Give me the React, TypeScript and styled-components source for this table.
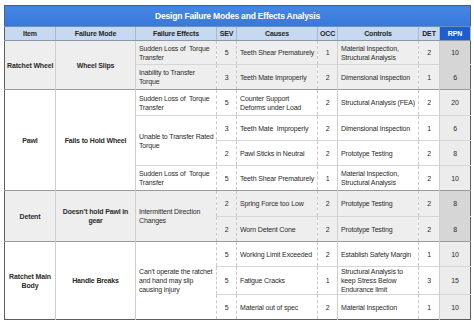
import React from "react";
import styled, { createGlobalStyle } from "styled-components";

const GlobalStyle = createGlobalStyle`
  html, body {
    margin: 0;
    padding: 0;
    background: #ffffff;
  }
  body {
    font-family: "Liberation Sans", Arial, sans-serif;
  }
`;

const Page = styled.main`
  width: 474px;
  height: 328px;
  padding: 5px 4px 0 4px;
  box-sizing: border-box;
  background: #ffffff;
`;

const Table = styled.table`
  width: 466px;
  border-collapse: collapse;
  table-layout: fixed;
  border: 1px solid #5f5f5f;
  font-size: 7px;
  letter-spacing: -0.15px;
  color: #2b2b2b;
`;

const TitleCell = styled.th`
  height: 20px;
  padding: 0;
  background: linear-gradient(#4686e4, #3878da);
  color: #ffffff;
  font-size: 8.5px;
  letter-spacing: -0.2px;
  font-weight: bold;
  text-align: center;
  border-bottom: 1px solid #6e8fbf;
`;

const HeadCell = styled.th<{ $dark?: boolean }>`
  height: 13px;
  padding: 0;
  font-weight: bold;
  text-align: center;
  background: ${(p) => (p.$dark ? "#1f5ccc" : "#c6d9f1")};
  color: ${(p) => (p.$dark ? "#ffffff" : "#1f1f1f")};
  border-right: 1px solid #a9b8cc;
  border-bottom: 1px solid #8c98a8;
`;

const Row = styled.tr<{ $h: number; $groupStart?: boolean }>`
  height: ${(p) => p.$h}px;
  border-top: 1px solid ${(p) => (p.$groupStart ? "#9a9a9a" : "#d6d6d6")};
`;

const GroupCell = styled.td<{ $shade?: boolean }>`
  padding: 0 2px;
  font-weight: bold;
  text-align: center;
  vertical-align: middle;
  white-space: pre;
  line-height: 9px;
  background: ${(p) => (p.$shade ? "#eeeeee" : "#ffffff")};
  border-right: 1px solid #cfcfcf;
`;

const TextCell = styled.td<{ $shade?: boolean; $dashed?: boolean }>`
  padding: 0 2px 0 3px;
  text-align: left;
  vertical-align: middle;
  white-space: pre;
  overflow: hidden;
  line-height: 9px;
  background: ${(p) => (p.$shade ? "#eeeeee" : "#ffffff")};
  border-right: 1px ${(p) => (p.$dashed ? "dashed #c8c8c8" : "solid #cfcfcf")};
`;

const NumCell = styled.td<{ $shade?: boolean; $solid?: boolean }>`
  padding: 0;
  text-align: center;
  vertical-align: middle;
  background: ${(p) => (p.$shade ? "#eeeeee" : "#ffffff")};
  border-right: 1px ${(p) => (p.$solid ? "solid #cfcfcf" : "dashed #c8c8c8")};
`;

const RpnCell = styled.td<{ $shade?: boolean }>`
  padding: 0;
  text-align: center;
  vertical-align: middle;
  background: ${(p) => (p.$shade ? "#d6d6d6" : "#ececec")};
`;

type Line = {
  h: number;
  item?: { text: string; span: number };
  mode?: { text: string; span: number };
  effect?: { text: string; span: number };
  sev: number;
  cause: string;
  occ: number;
  control: string;
  det: number;
};

type Group = { shade: boolean; lines: Line[] };

const groups: Group[] = [
  {
    shade: true,
    lines: [
      {
        h: 24,
        item: { text: "Ratchet Wheel", span: 2 },
        mode: { text: "Wheel Slips", span: 2 },
        effect: { text: "Sudden Loss of  Torque\nTransfer", span: 1 },
        sev: 5,
        cause: "Teeth Shear Prematurely",
        occ: 1,
        control: "Material Inspection,\nStructural Analysis",
        det: 2,
      },
      {
        h: 25,
        effect: { text: "Inability to Transfer\nTorque", span: 1 },
        sev: 3,
        cause: "Teeth Mate Improperly",
        occ: 2,
        control: "Dimensional Inspection",
        det: 1,
      },
    ],
  },
  {
    shade: false,
    lines: [
      {
        h: 26,
        item: { text: "Pawl", span: 4 },
        mode: { text: "Fails to Hold Wheel", span: 4 },
        effect: { text: "Sudden Loss of  Torque\nTransfer", span: 1 },
        sev: 5,
        cause: "Counter Support\nDeforms under Load",
        occ: 2,
        control: "Structural Analysis (FEA)",
        det: 2,
      },
      {
        h: 25,
        effect: { text: "Unable to Transfer Rated\nTorque", span: 2 },
        sev: 3,
        cause: "Teeth Mate  Improperly",
        occ: 2,
        control: "Dimensional Inspection",
        det: 1,
      },
      {
        h: 25,
        sev: 2,
        cause: "Pawl Sticks in Neutral",
        occ: 2,
        control: "Prototype Testing",
        det: 2,
      },
      {
        h: 25,
        effect: { text: "Sudden Loss of  Torque\nTransfer", span: 1 },
        sev: 5,
        cause: "Teeth Shear Prematurely",
        occ: 1,
        control: "Material Inspection,\nStructural Analysis",
        det: 2,
      },
    ],
  },
  {
    shade: true,
    lines: [
      {
        h: 26,
        item: { text: "Detent", span: 2 },
        mode: { text: "Doesn\u2019t hold Pawl in\ngear", span: 2 },
        effect: { text: "Intermittent Direction\nChanges", span: 2 },
        sev: 2,
        cause: "Spring Force too Low",
        occ: 2,
        control: "Prototype Testing",
        det: 2,
      },
      {
        h: 25,
        sev: 2,
        cause: "Worn Detent Cone",
        occ: 2,
        control: "Prototype Testing",
        det: 2,
      },
    ],
  },
  {
    shade: false,
    lines: [
      {
        h: 25,
        item: { text: "Ratchet Main\nBody", span: 3 },
        mode: { text: "Handle Breaks", span: 3 },
        effect: {
          text: "Can\u2019t operate the ratchet\nand hand may slip\ncausing injury",
          span: 3,
        },
        sev: 5,
        cause: "Working Limit Exceeded",
        occ: 2,
        control: "Establish Safety Margin",
        det: 1,
      },
      {
        h: 26,
        sev: 5,
        cause: "Fatigue Cracks",
        occ: 1,
        control: "Structural Analysis to\nkeep Stress Below\nEndurance limit",
        det: 3,
      },
      {
        h: 25,
        sev: 5,
        cause: "Material out of spec",
        occ: 2,
        control: "Material Inspection",
        det: 1,
      },
    ],
  },
];

const widths = [51, 80, 81, 20, 81, 20, 81, 21, 31];

export default function App() {
  return (
    <Page>
      <GlobalStyle />
      <Table>
        <colgroup>
          {widths.map((w, i) => (
            <col key={i} style={{ width: w }} />
          ))}
        </colgroup>
        <thead>
          <tr>
            <TitleCell colSpan={9}>Design Failure Modes and Effects Analysis</TitleCell>
          </tr>
          <tr>
            <HeadCell>Item</HeadCell>
            <HeadCell>Failure Mode</HeadCell>
            <HeadCell>Failure Effects</HeadCell>
            <HeadCell>SEV</HeadCell>
            <HeadCell>Causes</HeadCell>
            <HeadCell>OCC</HeadCell>
            <HeadCell>Controls</HeadCell>
            <HeadCell>DET</HeadCell>
            <HeadCell $dark>RPN</HeadCell>
          </tr>
        </thead>
        <tbody>
          {groups.map((g, gi) =>
            g.lines.map((l, li) => (
              <Row key={`${gi}-${li}`} $h={l.h} $groupStart={li === 0}>
                {l.item && (
                  <GroupCell rowSpan={l.item.span} $shade={g.shade}>
                    {l.item.text}
                  </GroupCell>
                )}
                {l.mode && (
                  <GroupCell rowSpan={l.mode.span} $shade={g.shade}>
                    {l.mode.text}
                  </GroupCell>
                )}
                {l.effect && (
                  <TextCell rowSpan={l.effect.span} $shade={g.shade} $dashed>
                    {l.effect.text}
                  </TextCell>
                )}
                <NumCell $shade={g.shade}>{l.sev}</NumCell>
                <TextCell $shade={g.shade} $dashed>
                  {l.cause}
                </TextCell>
                <NumCell $shade={g.shade} $solid>
                  {l.occ}
                </NumCell>
                <TextCell $shade={g.shade} $dashed>
                  {l.control}
                </TextCell>
                <NumCell $shade={g.shade} $solid>
                  {l.det}
                </NumCell>
                <RpnCell $shade={g.shade}>{l.sev * l.occ * l.det}</RpnCell>
              </Row>
            ))
          )}
        </tbody>
      </Table>
    </Page>
  );
}
